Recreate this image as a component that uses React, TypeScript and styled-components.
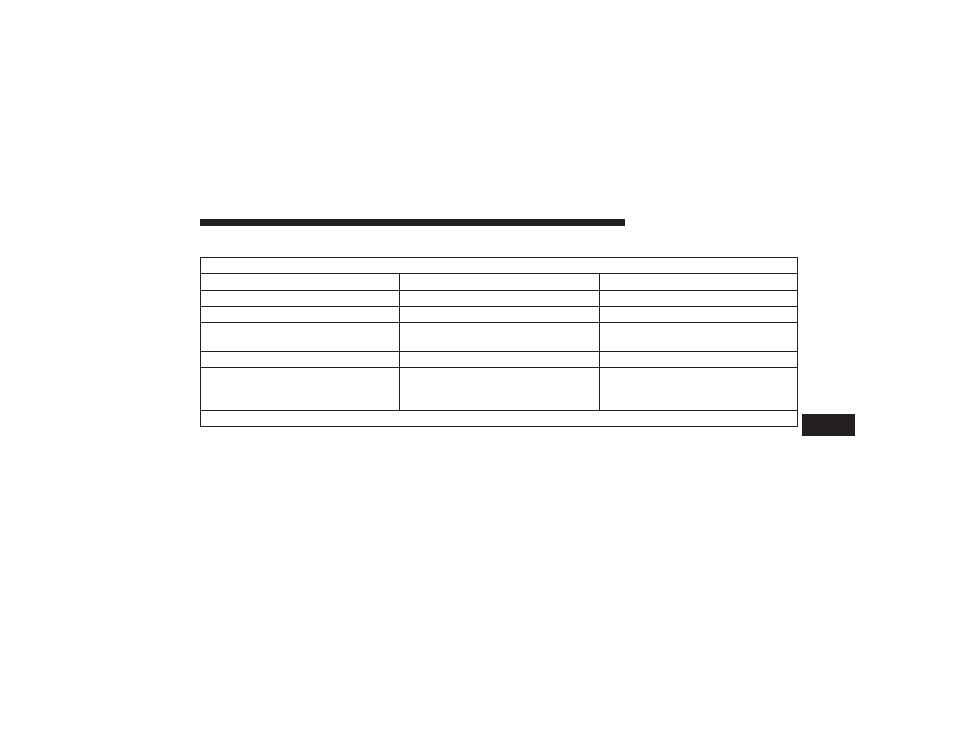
import React from "react"
import styled, { createGlobalStyle } from "styled-components"

const Global = createGlobalStyle`
  html, body {
    margin: 0;
    padding: 0;
    background: #ffffff;
    font-family: "Liberation Sans", Arial, sans-serif;
  }
`

const ink = "#231f20"

const Page = styled.div`
  width: 954px;
  min-height: 737px;
  box-sizing: border-box;
  padding: 219px 0 0 200px;
`

const Rule = styled.div`
  width: 425px;
  height: 7px;
  background: ${ink};
`

const Content = styled.div`
  display: flex;
  align-items: flex-start;
  gap: 4px;
  margin-top: 31px;
`

const Table = styled.div`
  width: 598px;
  box-sizing: border-box;
  border: 1px solid ${ink};
`

const Row = styled.div<{ $h: number; $last?: boolean }>`
  display: grid;
  grid-template-columns: 199px 200px 197px;
  height: ${(p) => p.$h + (p.$last ? 0 : 1)}px;
  box-sizing: border-box;
  border-bottom: ${(p) => (p.$last ? "none" : `1px solid ${ink}`)};
`

const WideRow = styled(Row)`
  grid-template-columns: 1fr;
`

const Cell = styled.div`
  box-sizing: border-box;
  border-right: 1px solid ${ink};
  &:last-child {
    border-right: none;
  }
`

const Tab = styled.div`
  width: 53px;
  height: 22px;
  margin-top: 157px;
  background: ${ink};
`

const rows = [16, 15, 15, 28, 15, 42]

const App = () => {
  return (
    <Page>
      <Global />
      <Rule />
      <Content>
        <Table>
          <WideRow $h={15} />
          {rows.map((h, i) => (
            <Row key={i} $h={h}>
              <Cell />
              <Cell />
              <Cell />
            </Row>
          ))}
          <WideRow $h={15} $last />
        </Table>
        <Tab />
      </Content>
    </Page>
  )
}

export default App
